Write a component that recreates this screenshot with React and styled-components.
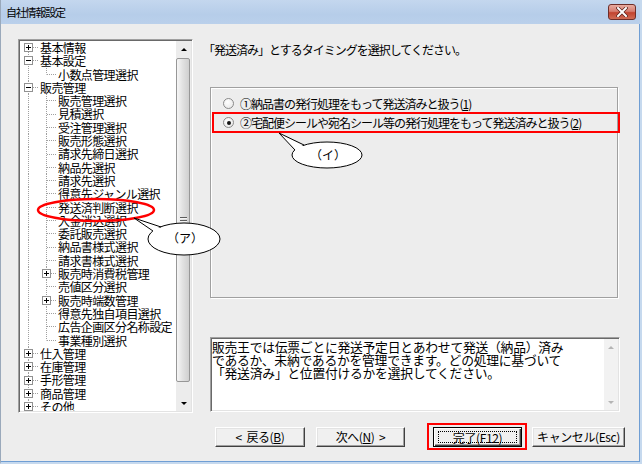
import React from "react";
import styled, { createGlobalStyle, css } from "styled-components";

const FONT = `"Noto Sans CJK JP", "Noto Sans", "Liberation Sans", sans-serif`;

const GlobalStyle = createGlobalStyle`
  html, body { margin: 0; padding: 0; }
  body { font-family: ${FONT}; background: #ffffff; color: #000; }
  #root { width: 642px; height: 464px; }
`;

const Window = styled.div`
  position: relative;
  width: 642px;
  height: 464px;
  box-sizing: border-box;
  display: flex;
  flex-direction: column;
  background: #c6d9ee;
  border-left: 1px solid #9aa9bb;
  border-right: 2px solid #c6d9ee;
  border-bottom: 2px solid #c6d9ee;
  overflow: hidden;
`;

const TitleBar = styled.div`
  height: 24px;
  flex: none;
  display: flex;
  align-items: center;
  justify-content: space-between;
  padding: 0 4px 0 5px;
  background: linear-gradient(#c4d7ee, #b6cde9 60%, #bad0eb);
`;

const Title = styled.span`
  font-size: 11px;
  letter-spacing: -1.2px;
  line-height: 1;
`;

const CloseButton = styled.div`
  width: 28px;
  height: 16px;
  box-sizing: border-box;
  border: 1px solid #6e2d28;
  border-radius: 3px;
  background: linear-gradient(#e8aba0, #d67d70 45%, #c2432f 55%, #d06c55);
  display: flex;
  align-items: center;
  justify-content: center;
`;

const Body = styled.div`
  flex: 1;
  display: flex;
  align-items: flex-start;
  padding: 15px 0 0 17px;
  background: #ededed;
  border-right: 1px solid #6f9ed4;
  border-bottom: 1px solid #6f9ed4;
`;

/* ---------- tree ---------- */

const Tree = styled.div`
  width: 175px;
  height: 374px;
  flex: none;
  box-sizing: border-box;
  display: flex;
  padding: 1px;
  background: #fff;
  border: 1px solid;
  border-color: #a0a0a0 #fff #fff #a0a0a0;
  box-shadow: inset 1px 1px 0 #696969, inset -1px -1px 0 #e3e3e3;
`;

const TreeList = styled.div`
  flex: 1;
  overflow: hidden;
`;

const TreeRow = styled.div`
  height: 13.3px;
  display: flex;
  align-items: center;
`;

const vDots = "repeating-linear-gradient(to bottom, #a0a0a0 0 1px, transparent 1px 2px)";
const hDots = "repeating-linear-gradient(to right, #a0a0a0 0 1px, transparent 1px 2px)";

const Cell = styled.span`
  flex: none;
  width: 18px;
  height: 100%;
  display: flex;
  align-items: center;
  background-repeat: no-repeat;
  ${({ $kind }) =>
    $kind === "pipe" &&
    css`
      background-image: ${vDots};
      background-size: 1px 100%;
      background-position: 8px 0;
    `}
  ${({ $kind }) =>
    $kind === "tee" &&
    css`
      background-image: ${vDots}, ${hDots};
      background-size: 1px 100%, 9px 1px;
      background-position: 8px 0, 9px 50%;
    `}
  ${({ $kind }) =>
    $kind === "corner" &&
    css`
      background-image: ${vDots}, ${hDots};
      background-size: 1px 50%, 9px 1px;
      background-position: 8px 0, 9px 50%;
    `}
  ${({ $kind }) =>
    $kind === "first" &&
    css`
      background-image: ${vDots}, ${hDots};
      background-size: 1px 50%, 9px 1px;
      background-position: 8px 100%, 9px 50%;
    `}
`;

const Expander = styled.span`
  position: relative;
  width: 9px;
  height: 9px;
  margin-left: 4px;
  box-sizing: border-box;
  border: 1px solid #919191;
  background: #fff;
  &::before {
    content: "";
    position: absolute;
    left: 1px;
    top: 3px;
    width: 5px;
    height: 1px;
    background: #000;
  }
  ${({ $open }) =>
    !$open &&
    css`
      &::after {
        content: "";
        position: absolute;
        left: 3px;
        top: 1px;
        width: 1px;
        height: 5px;
        background: #000;
      }
    `}
`;

const TreeLabel = styled.span`
  display: block;
  height: 13.3px;
  margin-left: 2px;
  font-size: 12px;
  letter-spacing: -0.6px;
  line-height: 13.3px;
  white-space: nowrap;
`;

const ScrollBar = styled.div`
  flex: none;
  width: 15px;
  display: flex;
  flex-direction: column;
  background: #ececec;
`;

const ScrollButton = styled.div`
  flex: none;
  height: ${({ $h }) => $h}px;
  display: flex;
  align-items: center;
  justify-content: center;
`;

const Arrow = styled.span`
  width: 0;
  height: 0;
  border-left: 3px solid transparent;
  border-right: 3px solid transparent;
  ${({ $dir, $color }) =>
    $dir === "up"
      ? css`border-bottom: 3px solid ${$color};`
      : css`border-top: 3px solid ${$color};`}
`;

const Track = styled.div`
  flex: 1;
  display: flex;
  padding: 0 1px 13px 0;
`;

const Thumb = styled.div`
  flex: 1;
  border: 1px solid #979797;
  border-radius: 2px;
  background: linear-gradient(to right, #f6f6f6, #e2e2e2 45%, #cfcfcf);
  display: flex;
  align-items: center;
  justify-content: center;
`;

const Grip = styled.span`
  width: 7px;
  height: 7px;
  background: repeating-linear-gradient(to bottom, #5c5c5c 0 1px, #f4f4f4 1px 2px, transparent 2px 3px);
`;

/* ---------- right side ---------- */

const Main = styled.div`
  width: 422px;
  margin-left: 10px;
  padding-top: 4px;
  display: flex;
  flex-direction: column;
`;

const Heading = styled.div`
  height: 14px;
  font-size: 12px;
  line-height: 14px;
  letter-spacing: -1px;
  white-space: nowrap;
`;

const Group = styled.div`
  margin: 30px 0 0 7px;
  width: 408px;
  height: 211px;
  box-sizing: border-box;
  padding-top: 6px;
  display: flex;
  flex-direction: column;
  border: 1px solid #a0a0a0;
  box-shadow: inset 1px 1px 0 #fff, 1px 1px 0 #fff;
`;

const Option = styled.div`
  height: ${({ $marked }) => ($marked ? 21 : 18)}px;
  box-sizing: border-box;
  display: flex;
  align-items: center;
  gap: 6px;
  padding-left: 12px;
  font-size: 12px;
  letter-spacing: -1px;
  white-space: nowrap;
  ${({ $marked }) =>
    $marked &&
    css`
      margin: 0 -3px 0 1px;
      padding-left: 9px;
      border: 2px solid #ff0000;
    `}
`;

const Radio = styled.span`
  flex: none;
  width: 11px;
  height: 11px;
  box-sizing: border-box;
  border-radius: 50%;
  border: 1px solid #8a8a8a;
  background: radial-gradient(circle at 40% 35%, #ffffff, #e4e4e4);
  display: flex;
  align-items: center;
  justify-content: center;
  ${({ $checked }) =>
    $checked &&
    css`
      &::after {
        content: "";
        width: 4px;
        height: 4px;
        border-radius: 50%;
        background: #151515;
      }
    `}
`;

const Memo = styled.div`
  margin: 39px 0 0 7px;
  width: 410px;
  height: 75px;
  box-sizing: border-box;
  display: flex;
  padding: 1px;
  background: #fff;
  border: 1px solid;
  border-color: #a0a0a0 #fff #fff #a0a0a0;
  box-shadow: inset 1px 1px 0 #696969, inset -1px -1px 0 #e3e3e3;
`;

const MemoText = styled.div`
  flex: 1;
  padding-top: 1px;
  font-size: 12.8px;
  line-height: 13px;
  letter-spacing: -0.25px;
  white-space: nowrap;
`;

const MemoLine = styled.div`
  height: 13px;
`;

const MemoScroll = styled.div`
  flex: none;
  width: 14px;
  display: flex;
  flex-direction: column;
  justify-content: space-between;
  background: #f2f2f2;
`;

const ButtonRow = styled.div`
  margin-top: 11px;
  height: 27px;
  padding-left: 12px;
  display: flex;
  align-items: center;
`;

const Button = styled.div`
  position: relative;
  flex: none;
  width: ${({ $w }) => $w}px;
  height: 20px;
  margin-left: ${({ $gap }) => $gap || 0}px;
  box-sizing: border-box;
  display: flex;
  align-items: center;
  justify-content: center;
  font-size: 12px;
  letter-spacing: -0.4px;
  white-space: pre;
  background: #f0f0f0;
  border: 1px solid;
  border-color: #fff #404040 #404040 #fff;
  box-shadow: inset -1px -1px 0 #a0a0a0, inset 1px 1px 0 #e3e3e3;
  ${({ $default }) =>
    $default &&
    css`
      border-color: #000;
      box-shadow: inset 1px 1px 0 #fff, inset -1px -1px 0 #404040, inset -2px -2px 0 #a0a0a0;
      &::after {
        content: "";
        position: absolute;
        inset: 3px 4px;
        border: 1px dotted #000;
      }
    `}
`;

const RedFrame = styled.div`
  margin-left: 22px;
  padding: 2px 3px 1px 4px;
  border: 2px solid #ff0000;
  display: flex;
`;

/* ---------- annotations ---------- */

const Overlay = styled.svg`
  position: absolute;
  left: 0;
  top: 0;
  pointer-events: none;
  font-family: ${FONT};
`;

const tree = [
  { label: "基本情報", level: 0, box: "plus", first: true },
  { label: "基本設定", level: 0, box: "minus" },
  { label: "小数点管理選択", level: 1, last: true },
  { label: "販売管理", level: 0, box: "minus" },
  { label: "販売管理選択", level: 1 },
  { label: "見積選択", level: 1 },
  { label: "受注管理選択", level: 1 },
  { label: "販売形態選択", level: 1 },
  { label: "請求先締日選択", level: 1 },
  { label: "納品先選択", level: 1 },
  { label: "請求先選択", level: 1 },
  { label: "得意先ジャンル選択", level: 1 },
  { label: "発送済判断選択", level: 1 },
  { label: "入金消込選択", level: 1 },
  { label: "委託販売選択", level: 1 },
  { label: "納品書様式選択", level: 1 },
  { label: "請求書様式選択", level: 1 },
  { label: "販売時消費税管理", level: 1, box: "plus" },
  { label: "売値区分選択", level: 1 },
  { label: "販売時端数管理", level: 1, box: "plus" },
  { label: "得意先独自項目選択", level: 1 },
  { label: "広告企画区分名称設定", level: 1 },
  { label: "事業種別選択", level: 1, last: true },
  { label: "仕入管理", level: 0, box: "plus" },
  { label: "在庫管理", level: 0, box: "plus" },
  { label: "手形管理", level: 0, box: "plus" },
  { label: "商品管理", level: 0, box: "plus" },
  { label: "その他", level: 0, box: "plus" },
];

function TreeItem({ item }) {
  const expander = item.box ? <Expander $open={item.box === "minus"} /> : null;
  if (item.level === 0) {
    return (
      <TreeRow>
        <Cell $kind={item.first ? "first" : "tee"}>{expander}</Cell>
        <TreeLabel>{item.label}</TreeLabel>
      </TreeRow>
    );
  }
  return (
    <TreeRow>
      <Cell $kind="pipe" />
      <Cell $kind={item.last ? "corner" : "tee"}>{expander}</Cell>
      <TreeLabel>{item.label}</TreeLabel>
    </TreeRow>
  );
}

export default function App() {
  return (
    <>
      <GlobalStyle />
      <Window>
        <TitleBar>
          <Title>自社情報設定</Title>
          <CloseButton>
            <svg width="12" height="10" viewBox="0 0 12 10">
              <path d="M2 1 L10 9 M10 1 L2 9" stroke="#5a1f1a" strokeWidth="3.4" strokeLinecap="square" />
              <path d="M2 1 L10 9 M10 1 L2 9" stroke="#ffffff" strokeWidth="2" strokeLinecap="square" />
            </svg>
          </CloseButton>
        </TitleBar>
        <Body>
          <Tree>
            <TreeList>
              {tree.map((item) => (
                <TreeItem key={item.label} item={item} />
              ))}
            </TreeList>
            <ScrollBar>
              <ScrollButton $h={17}>
                <Arrow $dir="up" $color="#000" />
              </ScrollButton>
              <Track>
                <Thumb>
                  <Grip />
                </Thumb>
              </Track>
              <ScrollButton $h={16}>
                <Arrow $dir="down" $color="#000" />
              </ScrollButton>
            </ScrollBar>
          </Tree>
          <Main>
            <Heading>「発送済み」とするタイミングを選択してください。</Heading>
            <Group>
              <Option>
                <Radio />
                <span>
                  ①納品書の発行処理をもって発送済みと扱う(<u>1</u>)
                </span>
              </Option>
              <Option $marked>
                <Radio $checked />
                <span>
                  ②宅配便シールや宛名シール等の発行処理をもって発送済みと扱う(<u>2</u>)
                </span>
              </Option>
            </Group>
            <Memo>
              <MemoText>
                <MemoLine>販売王では伝票ごとに発送予定日とあわせて発送（納品）済み</MemoLine>
                <MemoLine>であるか、未納であるかを管理できます。どの処理に基づいて</MemoLine>
                <MemoLine>「発送済み」と位置付けるかを選択してください。</MemoLine>
              </MemoText>
              <MemoScroll>
                <ScrollButton $h={17}>
                  <Arrow $dir="up" $color="#b4b4b4" />
                </ScrollButton>
                <ScrollButton $h={16}>
                  <Arrow $dir="down" $color="#b4b4b4" />
                </ScrollButton>
              </MemoScroll>
            </Memo>
            <ButtonRow>
              <Button $w={90}>
                {"<  戻る("}
                <u>B</u>)
              </Button>
              <Button $w={89} $gap={11}>
                次へ(<u>N</u>
                {")  >"}
              </Button>
              <RedFrame>
                <Button $w={89} $default>
                  完了(F12)
                </Button>
              </RedFrame>
              <Button $w={93} $gap={5}>
                キャンセル(Esc)
              </Button>
            </ButtonRow>
          </Main>
        </Body>
        <Overlay width="642" height="464" viewBox="0 0 642 464">
          <ellipse cx="95" cy="210" rx="58" ry="11" fill="none" stroke="#ff0000" strokeWidth="2.5" />
          <ellipse cx="183" cy="239" rx="36" ry="16" fill="#ffffff" stroke="#000" strokeWidth="1" />
          <polygon points="133,218 154,233 162,229" fill="#ffffff" />
          <polyline points="152,231 133,218 160,227" fill="none" stroke="#000" strokeWidth="1" />
          <text x="184" y="243" textAnchor="middle" fontSize="12">
            （ア）
          </text>
          <ellipse cx="326" cy="155" rx="35" ry="13" fill="#ffffff" stroke="#000" strokeWidth="1" />
          <polygon points="278,133 304,147 295,151" fill="#ffffff" />
          <polyline points="294,150 278,133 303,145" fill="none" stroke="#000" strokeWidth="1" />
          <text x="327" y="160" textAnchor="middle" fontSize="12">
            （イ）
          </text>
        </Overlay>
      </Window>
    </>
  );
}
